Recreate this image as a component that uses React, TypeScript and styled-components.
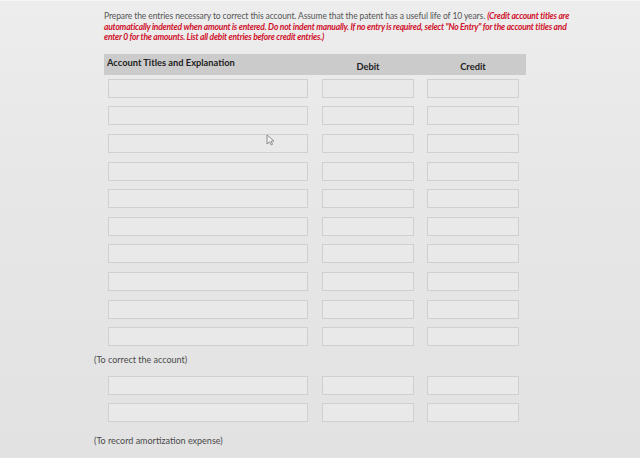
import React from 'react'
import styled, {createGlobalStyle} from 'styled-components'

const GlobalStyle = createGlobalStyle`
  html, body {
    margin: 0;
    padding: 0;
  }
  body {
    width: 640px;
    height: 458px;
    overflow: hidden;
    background: linear-gradient(180deg, #ededed 0%, #e7e7e7 40%, #e2e2e2 100%);
    font-family: Lato, "Open Sans", sans-serif;
  }
`

const Page = styled.div`
  position: relative;
  height: 458px;
  padding: 10px 0 0 104px;
  box-sizing: border-box;
  border-top: 1px solid #f6f6f6;
`

const Instructions = styled.p`
  margin: 0;
  width: 480px;
  font-size: 8.5px;
  line-height: 10.5px;
  color: #555;
  letter-spacing: -0.1px;
  white-space: nowrap;
`

const Red = styled.span`
  color: #d0102a;
  font-style: italic;
  font-weight: 700;
  letter-spacing: -0.22px;
`

const Table = styled.div`
  margin-top: 11px;
  width: 422px;
`

const HeaderRow = styled.div`
  display: grid;
  grid-template-columns: 218px 105px 99px;
  height: 21px;
  background: #cbcbcb;
  align-items: center;
`

const HeaderCell = styled.div<{$center?: boolean}>`
  font-size: 9.3px;
  font-weight: 700;
  color: #222;
  padding-left: ${(p) => (p.$center ? '0' : '3px')};
  text-align: ${(p) => (p.$center ? 'center' : 'left')};
  width: ${(p) => (p.$center ? '92px' : 'auto')};
  margin-top: ${(p) => (p.$center ? '4px' : '-4px')};
`

const Row = styled.div`
  display: grid;
  grid-template-columns: 218px 105px 99px;
  height: 27.6px;
  align-items: center;
`

const Field = styled.div<{$w: number; $offset?: number}>`
  width: ${(p) => p.$w}px;
  height: 19px;
  margin-left: ${(p) => p.$offset || 0}px;
  box-sizing: border-box;
  border: 1px solid #d0d0d0;
  background: #e9e9e9;
`

const Note = styled.div<{$top: number; $bottom: number}>`
  font-size: 9px;
  line-height: 10px;
  color: #4a4a4a;
  padding: ${(p) => p.$top}px 0 ${(p) => p.$bottom}px 0;
  margin-left: -10px;
`

const Cursor = styled.svg`
  position: absolute;
  left: 266px;
  top: 133px;
`

const Rows = ({count}: {count: number}) => (
  <>
    {Array.from({length: count}).map((_, i) => (
      <Row key={i}>
        <Field $w={200} $offset={4} />
        <Field $w={92} />
        <Field $w={92} />
      </Row>
    ))}
  </>
)

const App = () => {
  return (
    <>
      <GlobalStyle />
      <Page>
        <Instructions>
          Prepare the entries necessary to correct this account. Assume that the patent has a useful life of 10 years.{' '}
          <Red>(Credit account titles are</Red>
          <br />
          <Red>
            automatically indented when amount is entered. Do not indent manually. If no entry is required, select "No
            Entry" for the account titles and
          </Red>
          <br />
          <Red>enter 0 for the amounts. List all debit entries before credit entries.)</Red>
        </Instructions>
        <Table>
          <HeaderRow>
            <HeaderCell>Account Titles and Explanation</HeaderCell>
            <HeaderCell $center>Debit</HeaderCell>
            <HeaderCell $center>Credit</HeaderCell>
          </HeaderRow>
          <Rows count={10} />
          <Note $top={5} $bottom={6}>(To correct the account)</Note>
          <Rows count={2} />
          <Note $top={9} $bottom={0}>(To record amortization expense)</Note>
        </Table>
        <Cursor width="9" height="12" viewBox="0 0 9 12">
          <path d="M1 1 L1 10 L3.5 7.8 L5.2 11 L6.6 10.3 L5 7.2 L8 7 Z" fill="#f2f2f2" stroke="#777" strokeWidth="0.8" />
        </Cursor>
      </Page>
    </>
  )
}

export default App
